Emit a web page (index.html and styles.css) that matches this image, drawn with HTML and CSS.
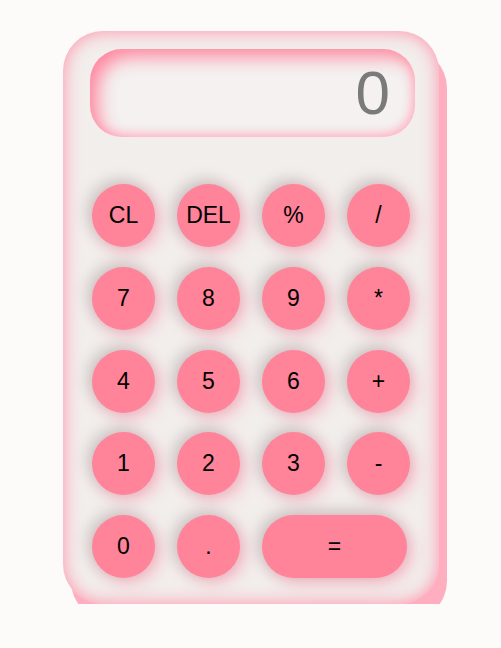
FILE: index.html
```
<!DOCTYPE html>
<html>
<head>
<meta charset="utf-8">
<link rel="stylesheet" href="styles.css">
</head>
<body>
<div class="calc">
  <div class="display"><span class="value">0</span></div>
  <div class="keys">
    <button class="key">CL</button>
    <button class="key">DEL</button>
    <button class="key">%</button>
    <button class="key">/</button>
    <button class="key">7</button>
    <button class="key">8</button>
    <button class="key">9</button>
    <button class="key">*</button>
    <button class="key">4</button>
    <button class="key">5</button>
    <button class="key">6</button>
    <button class="key">+</button>
    <button class="key">1</button>
    <button class="key">2</button>
    <button class="key">3</button>
    <button class="key">-</button>
    <button class="key">0</button>
    <button class="key">.</button>
    <button class="key key-wide">=</button>
  </div>
</div>
</body>
</html>
```
FILE: styles.css
```
html, body {
  margin: 0;
  padding: 0;
  background: #fcfbf9;
}
body {
  font-family: "Liberation Sans", Arial, sans-serif;
  padding: 31px 0 0 63px;
}
.calc {
  box-sizing: border-box;
  width: 376px;
  height: 573px;
  border-radius: 40px;
  background: #f2eeec;
  box-shadow: inset 0 0 18px #ff8fa8, 8px 17px 0 #ffaec0;
  padding: 18px 24px 0 27px;
}
.display {
  box-sizing: border-box;
  height: 88px;
  border-radius: 32px;
  background: #f4f1f0;
  box-shadow: inset 8px 8px 18px #ff88a0, inset -3px -3px 10px #ffbfcc;
  display: flex;
  align-items: center;
  justify-content: flex-end;
  padding-right: 25px;
}
.value {
  font-size: 62px;
  color: #7a7a7a;
  line-height: 1;
}
.keys {
  margin-top: 47px;
  margin-left: 2px;
  display: grid;
  grid-template-columns: repeat(4, 63px);
  column-gap: 22px;
  row-gap: 19.75px;
}
.key {
  width: 63px;
  height: 63px;
  border: none;
  border-radius: 32px;
  background: #ff8399;
  color: #000;
  font-family: "Liberation Sans", Arial, sans-serif;
  font-size: 23px;
  padding: 0;
  display: flex;
  align-items: center;
  justify-content: center;
  box-shadow: -4px -4px 16px rgba(0, 0, 0, 0.17), 5px 5px 16px rgba(255, 120, 150, 0.45);
}
.key-wide {
  grid-column: span 2;
  width: 145px;
}
```
